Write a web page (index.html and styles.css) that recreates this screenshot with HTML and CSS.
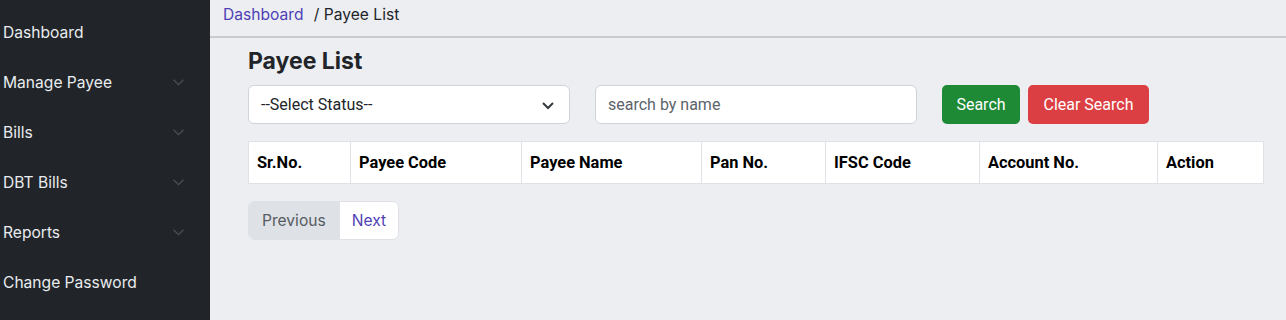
FILE: index.html
```html
<!DOCTYPE html>
<html lang="en">
  <head>
    <meta charset="UTF-8" />
    <meta name="viewport" content="width=device-width, initial-scale=1.0" />
    <title>Payee List</title>
    <link rel="stylesheet" href="styles.css">
  </head>
  <body>
    <div id="layout">
      <nav id="sidebar">
        <a class="nav-item" href="#">Dashboard</a>
        <a class="nav-item" href="#">Manage Payee
          <svg class="chev" viewBox="0 0 10 6"><path d="M0.5 0.5 L5 5 L9.5 0.5" /></svg>
        </a>
        <a class="nav-item" href="#">Bills
          <svg class="chev" viewBox="0 0 10 6"><path d="M0.5 0.5 L5 5 L9.5 0.5" /></svg>
        </a>
        <a class="nav-item" href="#">DBT Bills
          <svg class="chev" viewBox="0 0 10 6"><path d="M0.5 0.5 L5 5 L9.5 0.5" /></svg>
        </a>
        <a class="nav-item" href="#">Reports
          <svg class="chev" viewBox="0 0 10 6"><path d="M0.5 0.5 L5 5 L9.5 0.5" /></svg>
        </a>
        <a class="nav-item" href="#">Change Password</a>
      </nav>

      <main id="main">
        <div class="breadcrumb">
          <a href="#">Dashboard</a>
          <span class="crumb-sep">/ Payee List</span>
        </div>

        <div class="content">
          <h2 class="page-title">Payee List</h2>

          <div class="filters">
            <div class="select-box">
              <span>--Select Status--</span>
              <svg viewBox="0 0 16 16"><path d="M3 6 L8 11 L13 6" /></svg>
            </div>
            <input class="search-input" type="text" placeholder="search by name" />
            <button class="btn btn-green">Search</button>
            <button class="btn btn-red">Clear Search</button>
          </div>

          <table class="payee-table">
            <thead>
              <tr>
                <th style="width: 102px">Sr.No.</th>
                <th style="width: 171px">Payee Code</th>
                <th style="width: 180px">Payee Name</th>
                <th style="width: 124px">Pan No.</th>
                <th style="width: 154px">IFSC Code</th>
                <th style="width: 178px">Account No.</th>
                <th>Action</th>
              </tr>
            </thead>
          </table>

          <div class="pager">
            <span class="page-btn disabled">Previous</span>
            <a class="page-btn" href="#">Next</a>
          </div>
        </div>
      </main>
    </div>
  </body>
</html>
```

FILE: styles.css
```css
html {
  box-sizing: border-box;
}
*, *::before, *::after {
  box-sizing: inherit;
}
body {
  margin: 0;
  font-family: Inter, "Noto Sans", sans-serif;
  background-color: #eceef2;
}
#layout {
  display: flex;
  height: 320px;
}
#sidebar {
  width: 210px;
  flex-shrink: 0;
  background-color: #212529;
  padding-top: 7px;
  display: flex;
  flex-direction: column;
}
.nav-item {
  display: flex;
  align-items: center;
  justify-content: space-between;
  height: 50px;
  padding: 0 26px 0 3px;
  color: #e9ecef;
  font-size: 15.6px;
  text-decoration: none;
}
.chev {
  width: 11px;
  height: 7px;
  fill: none;
  stroke: #4a5057;
  stroke-width: 1.1;
}
#main {
  flex: 1;
}
.breadcrumb {
  height: 38px;
  padding: 5px 0 0 13px;
  border-bottom: 2px solid #c9cbce;
  font-size: 15.6px;
  color: #212529;
}
.breadcrumb a {
  color: #4f3fb6;
  text-decoration: none;
  margin-right: 6px;
}
.content {
  padding: 0 22px 0 38px;
}
.page-title {
  margin: 9px 0 10px;
  font-size: 23px;
  font-weight: 700;
  color: #212529;
  line-height: 28px;
}
.filters {
  display: flex;
  align-items: center;
  height: 39px;
}
.select-box {
  width: 322px;
  height: 39px;
  background-color: white;
  border: 1px solid #ced4da;
  border-radius: 6px;
  display: flex;
  align-items: center;
  justify-content: space-between;
  padding: 0 13px 0 12px;
  font-family: Roboto, sans-serif;
  font-size: 16px;
  color: #212529;
}
.select-box svg {
  width: 16px;
  height: 16px;
  fill: none;
  stroke: #343a40;
  stroke-width: 2;
}
.search-input {
  width: 322px;
  height: 39px;
  margin-left: 25px;
  border: 1px solid #ced4da;
  border-radius: 6px;
  padding: 0 12px;
  font-family: Roboto, sans-serif;
  font-size: 16px;
  background-color: white;
}
.search-input::placeholder {
  color: #5c636a;
}
.btn {
  height: 39px;
  border: none;
  border-radius: 5px;
  color: white;
  font-family: Roboto, sans-serif;
  font-size: 16px;
  padding: 0 13px;
  cursor: pointer;
}
.btn-green {
  margin-left: 25px;
  width: 78px;
  background-color: #1e8a36;
}
.btn-red {
  margin-left: 8px;
  width: 121px;
  background-color: #dc3f43;
}
.payee-table {
  width: 100%;
  margin-top: 17px;
  border-collapse: collapse;
  background-color: white;
  font-family: Roboto, sans-serif;
}
.payee-table th {
  height: 42px;
  text-align: left;
  font-size: 16.4px;
  font-weight: 700;
  color: #000;
  padding: 0 8px;
  border: 1px solid #dee2e6;
}
.pager {
  display: flex;
  width: fit-content;
  margin-top: 17px;
  border: 1px solid #dee2e6;
  border-radius: 6px;
  overflow: hidden;
  background-color: white;
}
.page-btn {
  height: 37px;
  display: flex;
  align-items: center;
  padding: 0 12px;
  font-size: 15.6px;
  color: #4f3fb6;
  text-decoration: none;
}
.page-btn.disabled {
  background-color: #dee2e6;
  color: #555b61;
  border-right: 1px solid #dee2e6;
  padding: 0 13px;
}
```
